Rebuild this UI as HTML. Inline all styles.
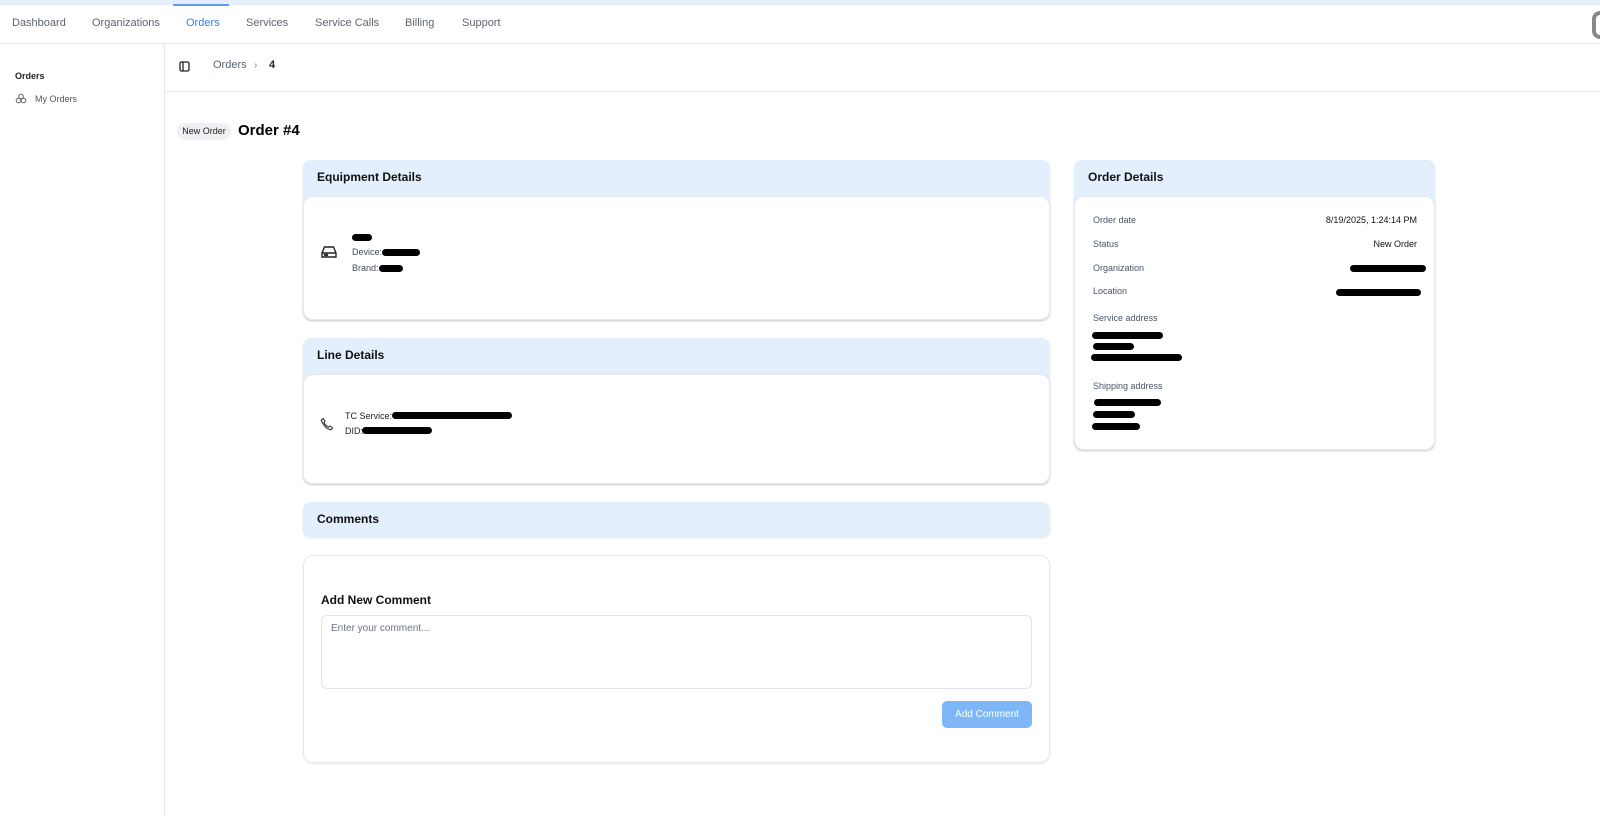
<!DOCTYPE html>
<html><head><style>
*{box-sizing:border-box;margin:0;padding:0}
body{width:1600px;height:816px;overflow:hidden;background:#fff;font-family:"Liberation Sans",Arial,sans-serif;color:#111;position:relative}
.a{position:absolute}
.topstrip{left:0;top:0;width:1600px;height:5px;background:#e4effb}
.nav{left:0;top:5px;width:1600px;height:39px;border-bottom:1px solid #e3e8ef}
.nav span{position:absolute;top:12px;font-size:11px;color:#5b6472}
.side{left:0;top:44px;width:165px;height:772px;border-right:1px solid #e3e8ef}
.crumb{left:165px;top:44px;width:1435px;height:48px;border-bottom:1px solid #e3e8ef}
.card{position:absolute;border-radius:8px;background:#e3effd;box-shadow:0 1px 2px rgba(0,0,0,.12)}
.card h3{position:absolute;left:14px;top:10px;font-size:12px;font-weight:bold;color:#111}
.body{position:absolute;left:0;right:0;bottom:0;background:#fff;border-radius:10px;border:1px solid #e6ebf2;box-shadow:0 1px 2px rgba(0,0,0,.1)}
.r{position:absolute;background:#000;border-radius:4px;height:7px}
.sm{position:absolute;font-size:9px;color:#444c59}
.lab{position:absolute;font-size:9px;color:#4b5565}
</style></head><body>
<div class="a topstrip"></div>
<div class="a" style="left:173px;top:4px;width:56px;height:2px;background:#5b9cf0"></div>
<div class="a nav">
<span style="left:12px">Dashboard</span><span style="left:92px">Organizations</span><span style="left:186px;color:#2f7ef0">Orders</span><span style="left:246px">Services</span><span style="left:315px">Service Calls</span><span style="left:405px">Billing</span><span style="left:462px">Support</span>
<div class="a" style="left:1592px;top:6px;width:16px;height:28px;border-radius:8px;border:4px solid #888;border-right-color:transparent"></div>
</div>
<div class="a side">
<div class="a" style="left:15px;top:27px;font-size:9px;font-weight:bold;color:#222">Orders</div>
<svg class="a" style="left:15px;top:49px" width="12" height="12" viewBox="0 0 12 12" fill="none" stroke="#666" stroke-width="1"><circle cx="6" cy="3.5" r="2.3"/><circle cx="3.5" cy="7.5" r="2.3"/><circle cx="8.5" cy="7.5" r="2.3"/></svg>
<div class="a" style="left:35px;top:50px;font-size:9px;color:#555">My Orders</div>
</div>
<div class="a crumb">
<svg class="a" style="left:14px;top:17px" width="11" height="11" viewBox="0 0 11 11" fill="none" stroke="#222" stroke-width="1.3"><rect x="1" y="1" width="9" height="9" rx="1.5"/><line x1="4" y1="1" x2="4" y2="10"/></svg>
<div class="a" style="left:48px;top:15px;font-size:11px;color:#5b6472">Orders</div>
<div class="a" style="left:89px;top:16px;font-size:10px;color:#888">›</div>
<div class="a" style="left:104px;top:15px;font-size:11px;font-weight:bold;color:#222">4</div>
</div>
<div class="a" style="left:177px;top:123px;width:54px;height:17px;border-radius:9px;background:#eef0f3;font-size:9px;color:#222;text-align:center;line-height:17px">New Order</div>
<div class="a" style="left:238px;top:122px;font-size:15px;font-weight:bold;color:#000">Order #4</div>

<div class="card" style="left:303px;top:160px;width:747px;height:160px"><h3>Equipment Details</h3>
<div class="body" style="top:36px">
<svg class="a" style="left:16px;top:47px" width="18" height="16" viewBox="0 0 18 16" fill="none" stroke="#222" stroke-width="1.4"><path d="M2 9 L4.5 3 H13.5 L16 9 V13 H2 Z M2 9 H16"/><circle cx="5" cy="11" r=".5"/><circle cx="7" cy="11" r=".5"/></svg>
<div class="r" style="left:48px;top:37px;width:20px"></div>
<div class="sm" style="left:48px;top:50px">Device:</div><div class="r" style="left:78px;top:52px;width:38px"></div>
<div class="sm" style="left:48px;top:66px">Brand:</div><div class="r" style="left:75px;top:68px;width:24px"></div>
</div></div>

<div class="card" style="left:303px;top:338px;width:747px;height:146px"><h3>Line Details</h3>
<div class="body" style="top:36px">
<svg class="a" style="left:16px;top:42px" width="14" height="14" viewBox="0 0 14 14" fill="none" stroke="#333" stroke-width="1.1"><path d="M3 1.5 L5 4 L4 5.5 Q5.5 8.5 8.5 10 L10 9 L12.5 11 L11 12.8 Q5 12 1.2 3 Z"/></svg>
<div class="sm" style="left:41px;top:36px;color:#222">TC Service:</div><div class="r" style="left:88px;top:37px;width:120px"></div>
<div class="sm" style="left:41px;top:51px;color:#222">DID:</div><div class="r" style="left:58px;top:52px;width:70px"></div>
</div></div>

<div class="card" style="left:303px;top:502px;width:747px;height:35px"><h3>Comments</h3></div>
<div class="a" style="left:303px;top:555px;width:747px;height:208px;border:1px solid #e3e8ef;border-radius:10px;box-shadow:0 1px 2px rgba(0,0,0,.08)">
<div class="a" style="left:17px;top:37px;font-size:12px;font-weight:bold;color:#111">Add New Comment</div>
<div class="a" style="left:17px;top:59px;width:711px;height:74px;border:1px solid #dfe4ec;border-radius:6px"><div class="a" style="left:9px;top:7px;font-size:10px;color:#6b7380">Enter your comment...</div></div>
<div class="a" style="left:638px;top:145px;width:90px;height:27px;border-radius:5px;background:#7db7f8;color:#fff;font-size:10px;text-align:center;line-height:27px">Add Comment</div>
</div>

<div class="card" style="left:1074px;top:160px;width:361px;height:290px"><h3>Order Details</h3>
<div class="body" style="top:36px">
<div class="lab" style="left:18px;top:18px">Order date</div><div class="sm" style="right:17px;top:18px;color:#111">8/19/2025, 1:24:14 PM</div>
<div class="lab" style="left:18px;top:42px">Status</div><div class="sm" style="right:17px;top:42px;color:#111">New Order</div>
<div class="lab" style="left:18px;top:66px">Organization</div><div class="r" style="left:275px;top:68px;width:76px"></div>
<div class="lab" style="left:18px;top:89px">Location</div><div class="r" style="left:261px;top:92px;width:85px"></div>
<div class="lab" style="left:18px;top:116px">Service address</div>
<div class="r" style="left:17px;top:135px;width:71px"></div><div class="r" style="left:18px;top:146px;width:41px"></div><div class="r" style="left:16px;top:157px;width:91px"></div>
<div class="lab" style="left:18px;top:184px">Shipping address</div>
<div class="r" style="left:19px;top:202px;width:67px"></div><div class="r" style="left:18px;top:214px;width:42px"></div><div class="r" style="left:17px;top:226px;width:48px"></div>
</div></div>
</body></html>
